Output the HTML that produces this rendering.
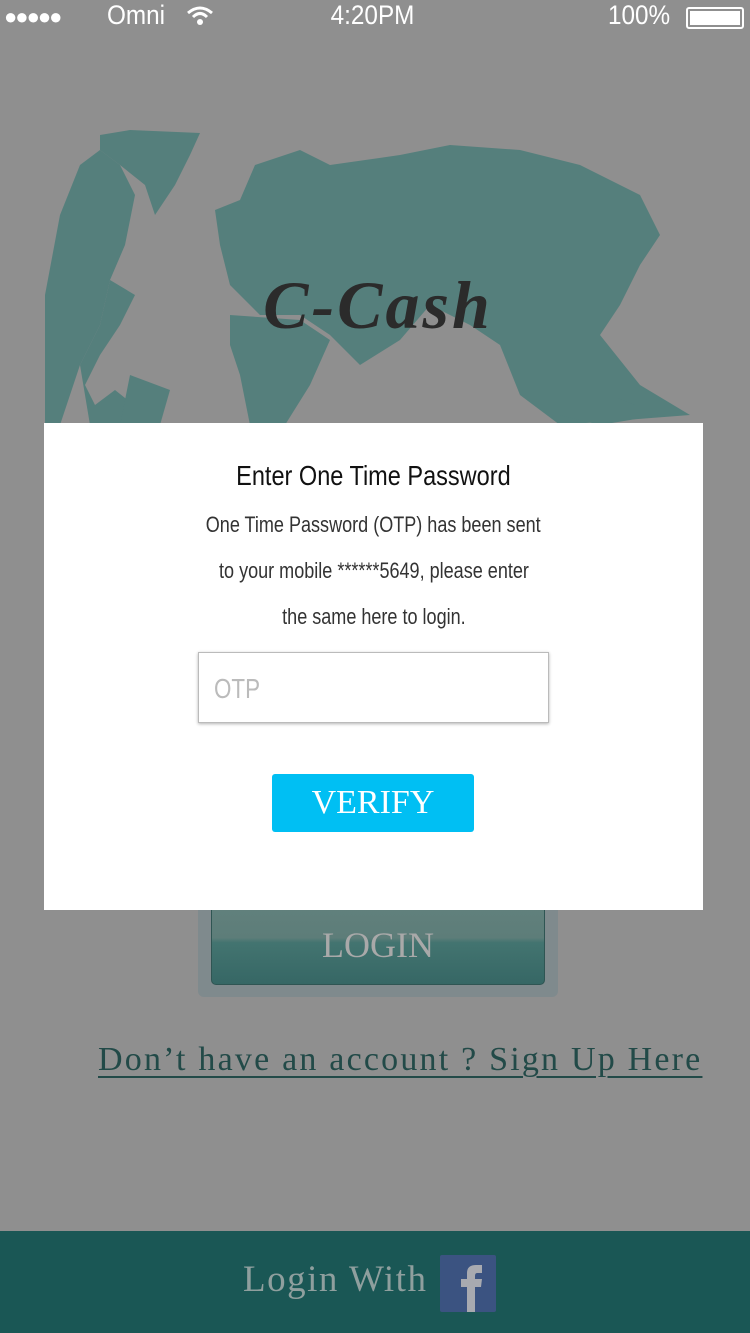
<!DOCTYPE html>
<html><head><meta charset="utf-8"><style>
*{margin:0;padding:0;box-sizing:border-box}
body{width:750px;height:1333px;background:#8f8f8f;position:relative;overflow:hidden;font-family:"Liberation Sans",sans-serif}
.abs{position:absolute}
.sb{color:#fff;font-size:27px;top:0px}
.narrow{display:inline-block;transform:scaleX(.85);transform-origin:center}
</style></head><body>
<div class="abs sb" style="left:4px;top:4px;font-size:22px;letter-spacing:-2px">●●●●●</div>
<div class="abs sb" style="left:107px;"><span class="narrow" style="transform-origin:left;transform:scaleX(.9)">Omni</span></div>
<svg class="abs" style="left:186px;top:5px" width="28" height="22" viewBox="0 0 28 22"><path d="M2 8 Q14 -2 26 8" stroke="#fff" stroke-width="3" fill="none"/><path d="M7 12 Q14 5 21 12" stroke="#fff" stroke-width="3" fill="none"/><circle cx="14" cy="17" r="3" fill="#fff"/></svg>
<div class="abs sb" style="left:313px;width:120px;text-align:center"><span class="narrow" style="transform:scaleX(.9)">4:20PM</span></div>
<div class="abs sb" style="left:608px;"><span class="narrow" style="transform-origin:left;transform:scaleX(.9)">100%</span></div>
<div class="abs" style="left:686px;top:7px;width:58px;height:22px;border:2px solid #fff;border-radius:3px;padding:2px"><div style="background:#fff;width:100%;height:100%"></div></div>
<svg class="abs" style="left:0;top:125px" width="750" height="300" viewBox="0 0 750 300" fill="#557f7c">
<path d="M100 10 L130 5 L200 8 L190 30 L175 60 L155 90 L145 60 L120 40 L100 25Z"/>
<path d="M100 25 L120 40 L135 70 L125 120 L110 155 L100 200 L80 240 L60 300 L45 300 L45 170 L60 90 L80 40Z"/>
<path d="M110 155 L135 170 L120 200 L100 230 L85 260 L95 280 L115 265 L140 285 L160 300 L90 300 L80 240 L100 200Z"/>
<path d="M130 250 L170 265 L160 300 L120 300Z"/>
<path d="M215 85 L240 75 L255 40 L300 25 L330 40 L400 30 L450 20 L520 25 L580 40 L640 70 L660 110 L640 140 L620 180 L600 210 L640 260 L690 290 L560 300 L520 270 L500 220 L470 200 L430 180 L400 215 L360 240 L330 210 L300 190 L260 190 L230 160 L220 120Z"/>
<path d="M230 190 L300 195 L330 215 L310 260 L285 300 L250 300 L240 250 L230 220Z"/>
<path d="M560 250 L610 270 L660 290 L600 300 L560 290Z"/>
</svg>
<div class="abs" style="left:0;top:266px;width:750px;text-align:center;font-family:'Liberation Serif',serif;font-style:italic;font-weight:bold;font-size:68px;color:#2b2b2b;letter-spacing:3px;padding-left:6px">C-Cash</div>
<div class="abs" style="left:198px;top:880px;width:360px;height:117px;background:#7f8a8d;border-radius:6px"></div>
<div class="abs" style="left:211px;top:880px;width:334px;height:105px;background:linear-gradient(#65837f,#5d7d79 55%,#437470 60%,#366765);border-radius:0 0 5px 5px;border:1px solid #2f5553;text-align:center;font-family:'Liberation Serif',serif;font-size:36px;color:#a9a9a9;padding-top:43px">LOGIN</div>
<div class="abs" style="left:98px;top:1041px;font-family:'Liberation Serif',serif;font-size:34px;color:#224a48;text-decoration:underline;text-decoration-thickness:2px;text-underline-offset:6px;white-space:nowrap;letter-spacing:2.2px">Don’t have an account ? Sign Up Here</div>
<div class="abs" style="left:0;top:1231px;width:750px;height:102px;background:#1a5755"></div>
<div class="abs" style="left:243px;top:1258px;font-family:'Liberation Serif',serif;font-size:37px;color:#8f9f9e;letter-spacing:1.5px">Login With</div>
<div class="abs" style="left:440px;top:1255px;width:56px;height:57px;background:#3b5381;border-radius:2px;overflow:hidden"><svg width="56" height="57" viewBox="0 0 56 57"><path d="M27 57 V32 H21 V24 H27 V18 Q27 10 36 10 H42 V18 H37 Q35 18 35 21 V24 H42 L41 32 H35 V57Z" fill="#a8aab0"/></svg></div>
<div class="abs" style="left:44px;top:423px;width:659px;height:487px;background:#fff"></div>
<div class="abs" style="left:44px;top:460px;width:659px;text-align:center;font-size:28px;color:#111"><span class="narrow" style="transform:scaleX(.84)">Enter One Time Password</span></div>
<div class="abs" style="left:44px;top:502px;width:659px;text-align:center;font-size:22px;color:#333;line-height:46px"><span class="narrow" style="transform:scaleX(.82)">One Time Password (OTP) has been sent</span><br><span class="narrow" style="transform:scaleX(.82)">to your mobile ******5649, please enter</span><br><span class="narrow" style="transform:scaleX(.82)">the same here to login.</span></div>
<div class="abs" style="left:198px;top:652px;width:351px;height:71px;border:1px solid #bbb;box-shadow:0 1px 3px rgba(0,0,0,.3);font-size:28px;color:#bbb;padding:20px 0 0 15px"><span class="narrow" style="transform:scaleX(.8);transform-origin:left">OTP</span></div>
<div class="abs" style="left:272px;top:774px;width:202px;height:58px;background:#00bff3;border-radius:3px;text-align:center;font-family:'Liberation Serif',serif;font-size:34px;color:#fff;padding-top:10px">VERIFY</div>
</body></html>
